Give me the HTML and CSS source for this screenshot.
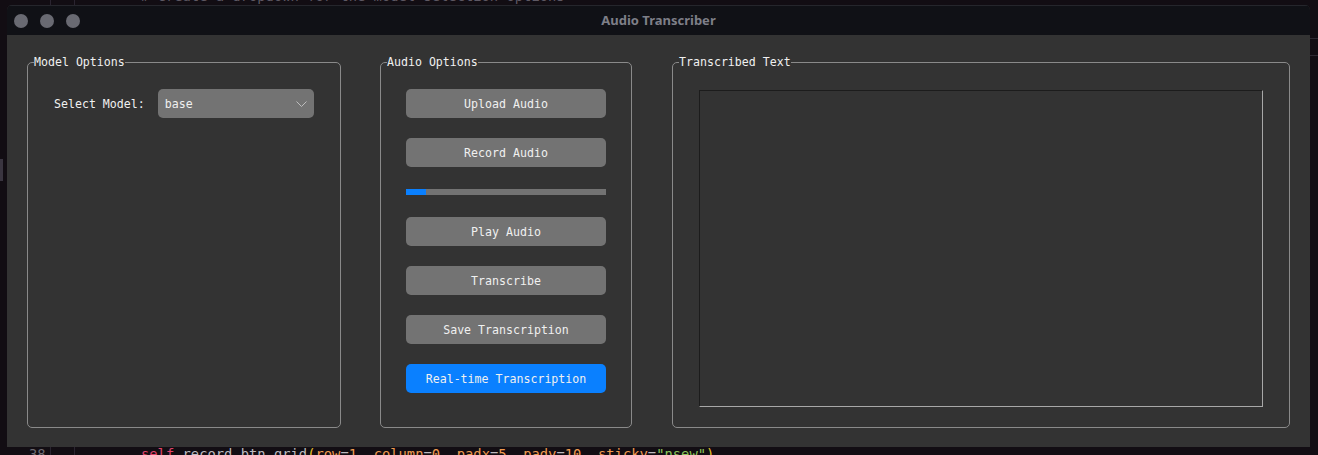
FILE: index.html
```html
<!DOCTYPE html>
<html>
<head>
<meta charset="utf-8">
<link rel="stylesheet" href="styles.css">
</head>
<body>
<div class="editor">
  <div class="gutter-line g1"></div>
  <div class="gutter-line g2"></div>
  <div class="code-line top-line"><span class="cm"># Create a dropdown for the model selection options</span></div>
  <div class="scroll-mark"></div>
  <div class="right-marks"><div></div><div></div></div>
  <div class="code-line bottom-line"><span class="ln">38</span><span class="c-self">self</span><span class="c-plain">.record_btn.grid</span><span class="c-par">(</span><span class="c-arg">row</span><span class="c-plain">=</span><span class="c-arg">1</span><span class="c-plain">, </span><span class="c-arg">column</span><span class="c-plain">=</span><span class="c-arg">0</span><span class="c-plain">, </span><span class="c-arg">padx</span><span class="c-plain">=</span><span class="c-arg">5</span><span class="c-plain">, </span><span class="c-arg">pady</span><span class="c-plain">=</span><span class="c-arg">10</span><span class="c-plain">, </span><span class="c-arg">sticky</span><span class="c-plain">=</span><span class="c-str">"nsew"</span><span class="c-par">)</span></div>
</div>

<div class="window">
  <div class="titlebar">
    <div class="lights"><span class="light"></span><span class="light"></span><span class="light"></span></div>
    <div class="title">Audio Transcriber</div>
  </div>
  <div class="content">
    <div class="group model-group">
      <div class="group-title">Model Options</div>
      <div class="model-row">
        <span class="label">Select Model:</span>
        <div class="combo">
          <span>base</span>
          <svg class="chevron" width="11" height="6" viewBox="0 0 11 6"><path d="M0.5 0.5 L5.5 5.5 L10.5 0.5" fill="none" stroke="#bdbdbd" stroke-width="1"/></svg>
        </div>
      </div>
    </div>
    <div class="group audio-group">
      <div class="group-title">Audio Options</div>
      <div class="audio-col">
        <div class="btn">Upload Audio</div>
        <div class="btn">Record Audio</div>
        <div class="progress"><div class="progress-fill" style="width:20px"></div></div>
        <div class="btn">Play Audio</div>
        <div class="btn">Transcribe</div>
        <div class="btn">Save Transcription</div>
        <div class="btn btn-primary">Real-time Transcription</div>
      </div>
    </div>
    <div class="group text-group">
      <div class="group-title">Transcribed Text</div>
      <div class="textarea"></div>
    </div>
  </div>
</div>
</body>
</html>
```
FILE: styles.css
```css
* { box-sizing: border-box; }
html, body {
  margin: 0;
  padding: 0;
  width: 1318px;
  height: 455px;
  overflow: hidden;
  background: #120d13;
}
body { position: relative; }

.editor {
  position: absolute;
  inset: 0;
  font-family: "DejaVu Sans Mono", monospace;
}
.gutter-line {
  position: absolute;
  top: 0;
  bottom: 0;
  width: 1px;
  background: #2a2430;
}
.g1 { left: 50px; }
.g2 { left: 74px; }
.code-line {
  position: absolute;
  left: 0;
  font-size: 13.8px;
  line-height: 16px;
  white-space: pre;
}
.top-line { top: -12px; left: 141px; }
.cm { color: #5e5964; }
.bottom-line { top: 446px; left: 0; }
.ln { display: inline-block; width: 141px; padding-left: 29px; color: #6e6a72; }
.c-self { color: #e0436b; }
.c-plain { color: #bdbabf; }
.c-par { color: #e8c02a; }
.c-arg { color: #ef9a4f; }
.c-str { color: #8cc45a; }
.scroll-mark {
  position: absolute;
  left: 0;
  top: 159px;
  width: 3px;
  height: 22px;
  background: #3a3540;
}
.right-marks div {
  position: absolute;
  left: 1310px;
  width: 8px;
  height: 1px;
  background: #2e2932;
}
.right-marks div:first-child { top: 38px; }
.right-marks div:last-child { top: 55px; }

.window {
  position: absolute;
  left: 7px;
  top: 5px;
  width: 1303px;
  height: 442px;
  display: flex;
  flex-direction: column;
  background: #333333;
  border-radius: 5px 5px 0 0;
  overflow: hidden;
}
.titlebar {
  height: 30px;
  background: #101116;
  border-top: 1px solid #25262c;
  display: flex;
  align-items: center;
  position: relative;
  flex: none;
}
.lights {
  display: flex;
  gap: 12px;
  padding-left: 7px;
}
.light {
  width: 14px;
  height: 14px;
  border-radius: 50%;
  background: #696a72;
}
.title {
  position: absolute;
  left: 0;
  right: 0;
  text-align: center;
  font-family: "Noto Sans", "Open Sans", sans-serif;
  font-weight: 700;
  font-size: 13px;
  color: #7e7f88;
  top: 5px;
}

.content {
  flex: 1;
  display: flex;
  padding: 27px 20px 19px 20px;
  gap: 39px;
  font-family: "DejaVu Sans Mono", monospace;
  font-size: 11.6px;
  color: #f0f0f0;
}
.group {
  position: relative;
  border: 1px solid #8a8a8a;
  border-radius: 5px;
}
.group-title {
  position: absolute;
  top: -9px;
  left: 6px;
  background: #333333;
  line-height: 16px;
  padding: 0;
  white-space: nowrap;
}
.model-group { width: 314px; flex: none; }
.audio-group { width: 252px; flex: none; margin-right: 1px; }
.text-group { flex: 1; padding: 27px 26px 20px 26px; }

.model-row {
  display: flex;
  align-items: center;
  gap: 13px;
  padding: 26px 25px 0 26px;
}
.label { line-height: 16px; }
.combo {
  width: 156px;
  height: 29px;
  background: #737373;
  border-radius: 5px;
  display: flex;
  align-items: center;
  justify-content: space-between;
  padding: 0 7px;
}
.chevron { margin-top: 1px; }

.audio-col {
  display: flex;
  flex-direction: column;
  align-items: flex-start;
  padding: 26px 0 0 25px;
}
.btn {
  width: 200px;
  height: 29px;
  background: #737373;
  border-radius: 5px;
  display: flex;
  align-items: center;
  justify-content: center;
  margin-bottom: 20px;
}
.btn-primary { background: #0a80ff; }
.progress {
  width: 200px;
  height: 6px;
  background: #737373;
  margin: 2px 0 22px 0;
}
.progress-fill {
  height: 100%;
  background: #0a80ff;
}
.textarea {
  width: 100%;
  height: 100%;
  background: #333333;
  border-top: 1px solid #1c1c1c;
  border-left: 1px solid #1c1c1c;
  border-right: 1px solid #a8a8a8;
  border-bottom: 1px solid #a8a8a8;
}
```
